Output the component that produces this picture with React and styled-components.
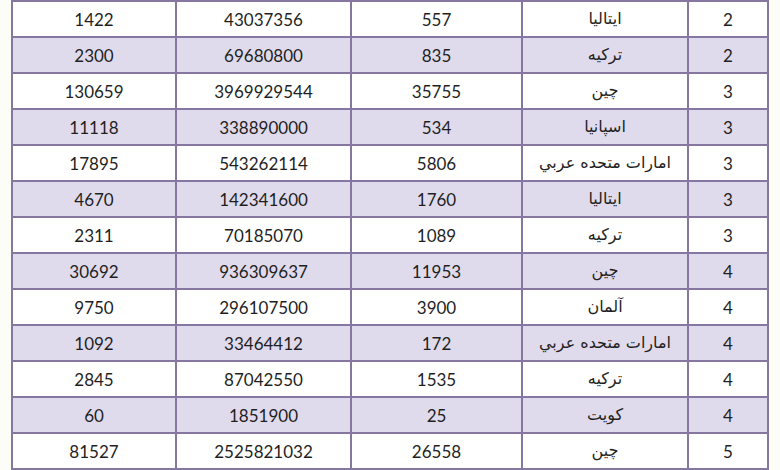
import React from 'react'
import styled, { createGlobalStyle } from 'styled-components'

const rows = [
  ['2', 'ایتالیا', '557', '43037356', '1422'],
  ['2', 'ترکیه', '835', '69680800', '2300'],
  ['3', 'چین', '35755', '3969929544', '130659'],
  ['3', 'اسپانیا', '534', '338890000', '11118'],
  ['3', 'امارات متحده عربي', '5806', '543262114', '17895'],
  ['3', 'ایتالیا', '1760', '142341600', '4670'],
  ['3', 'ترکیه', '1089', '70185070', '2311'],
  ['4', 'چین', '11953', '936309637', '30692'],
  ['4', 'آلمان', '3900', '296107500', '9750'],
  ['4', 'امارات متحده عربي', '172', '33464412', '1092'],
  ['4', 'ترکیه', '1535', '87042550', '2845'],
  ['4', 'کویت', '25', '1851900', '60'],
  ['5', 'چین', '26558', '2525821032', '81527'],
]

const widths = [80, 166, 171, 175, 164]

export default function App() {
  return (
    <Page>
      <GlobalStyle />
      <Table dir="rtl">
        <colgroup>
          {widths.map((w, i) => (
            <col key={i} style={{ width: w }} />
          ))}
        </colgroup>
        <tbody>
          {rows.map((r, i) => (
            <Row key={i} $shaded={i % 2 === 1}>
              {r.map((c, j) => (
                <Cell key={j} $arabic={j === 1}>
                  {c}
                </Cell>
              ))}
            </Row>
          ))}
        </tbody>
      </Table>
    </Page>
  )
}

const GlobalStyle = createGlobalStyle`
  html, body {
    margin: 0;
    padding: 0;
    background: #fdfdf8;
  }
`

const Page = styled.div`
  width: 780px;
  height: 470px;
  overflow: hidden;
  padding-left: 11px;
  box-sizing: border-box;
`

const Table = styled.table`
  width: 756px;
  table-layout: fixed;
  border-collapse: collapse;
  color: #1f1f1f;
`

const Row = styled.tr`
  background: ${(p) => (p.$shaded ? '#e0dbec' : '#ffffff')};
`

const Cell = styled.td`
  height: 34px;
  padding: 0;
  border: 2px solid #8577a0;
  text-align: center;
  vertical-align: middle;
  font-size: ${(p) => (p.$arabic ? '16px' : '17px')};
  font-family: ${(p) => (p.$arabic ? "'DejaVu Sans', sans-serif" : "Lato, sans-serif")};
  line-height: 1;
`
